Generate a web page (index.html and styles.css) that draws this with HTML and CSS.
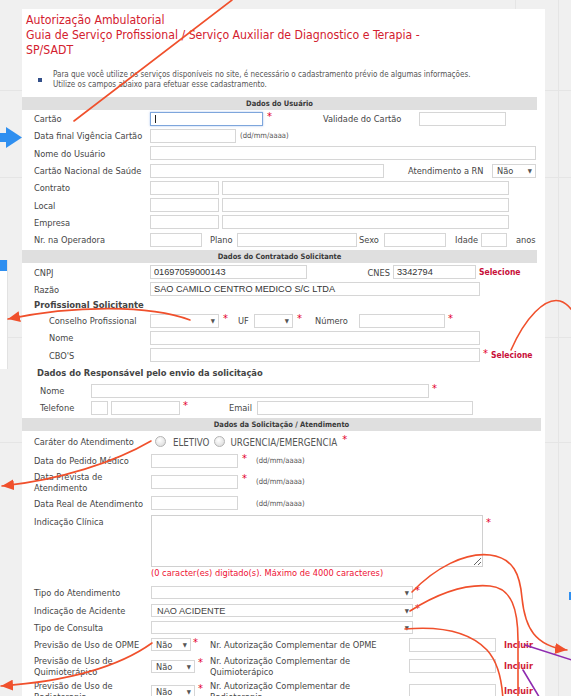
FILE: index.html
```html
<!DOCTYPE html>
<html lang="pt-BR">
<head>
    <meta charset="UTF-8">
    <meta name="viewport" content="width=device-width, initial-scale=1.0">
    <title>Autorização Ambulatorial - SP/SADT</title>
    <link rel="stylesheet" href="styles.css">
</head>
<body>
<div class="canvas">
    <div class="side-card"><div class="side-card-top"></div></div>

    <div class="panel">
        <h1 class="page-title">Autorização Ambulatorial<br>Guia de Serviço Profissional / Serviço Auxiliar de Diagnostico e Terapia -<br>SP/SADT</h1>

        <ul class="notice">
            <li>Para que você utilize os serviços disponíveis no site, é necessário o cadastramento prévio de algumas informações.<br>Utilize os campos abaixo para efetuar esse cadastramento.</li>
        </ul>

        <!-- Dados do Usuario -->
        <div class="sec-head">Dados do Usuário</div>
        <div class="row">
            <label class="lbl">Cartão</label>
            <span class="caret-wrap"><input class="in in-focus w113" type="text"></span>
            <span class="req">*</span>
            <span class="cap cap-validade">Validade do Cartão</span>
            <input class="in w87" type="text">
        </div>
        <div class="row">
            <label class="lbl">Data final Vigência Cartão</label>
            <input class="in w86" type="text">
            <span class="fmt">(dd/mm/aaaa)</span>
        </div>
        <div class="row">
            <label class="lbl">Nome do Usuário</label>
            <input class="in w386" type="text">
        </div>
        <div class="row">
            <label class="lbl">Cartão Nacional de Saúde</label>
            <input class="in w234" type="text">
            <span class="cap cap-rn">Atendimento a RN</span>
            <span class="sel w44"><select><option>Não</option></select></span>
        </div>
        <div class="row">
            <label class="lbl">Contrato</label>
            <input class="in w69" type="text">
            <input class="in w287 ml3" type="text">
        </div>
        <div class="row">
            <label class="lbl">Local</label>
            <input class="in w69" type="text">
            <input class="in w287 ml3" type="text">
        </div>
        <div class="row">
            <label class="lbl">Empresa</label>
            <input class="in w69" type="text">
            <input class="in w287 ml3" type="text">
        </div>
        <div class="row">
            <label class="lbl">Nr. na Operadora</label>
            <input class="in w52" type="text">
            <span class="cap cap-plano">Plano</span>
            <input class="in w120" type="text">
            <span class="cap cap-sexo">Sexo</span>
            <input class="in w62" type="text">
            <span class="cap cap-idade">Idade</span>
            <input class="in w26" type="text">
            <span class="cap cap-anos">anos</span>
        </div>

        <!-- Dados do Contratado Solicitante -->
        <div class="sec-head sec-head-2">Dados do Contratado Solicitante</div>
        <div class="row">
            <label class="lbl">CNPJ</label>
            <input class="in w157" type="text" value="01697059000143">
            <span class="cap cap-cnes">CNES</span>
            <input class="in w83" type="text" value="3342794">
            <a class="act ml3">Selecione</a>
        </div>
        <div class="row">
            <label class="lbl">Razão</label>
            <input class="in w330" type="text" value="SAO CAMILO CENTRO MEDICO S/C LTDA">
        </div>
        <div class="sub-head">Profissional Solicitante</div>
        <div class="row">
            <label class="lbl lbl-indent">Conselho Profissional</label>
            <span class="sel w69"><select><option></option></select></span>
            <span class="req">*</span>
            <span class="cap cap-uf">UF</span>
            <span class="sel w39"><select><option></option></select></span>
            <span class="req">*</span>
            <span class="cap cap-numero">Número</span>
            <input class="in w86" type="text">
            <span class="req ml3">*</span>
        </div>
        <div class="row">
            <label class="lbl lbl-indent">Nome</label>
            <input class="in w330" type="text">
        </div>
        <div class="row">
            <label class="lbl lbl-indent">CBO'S</label>
            <input class="in w330" type="text">
            <span class="req ml3">*</span>
            <a class="act ml2">Selecione</a>
        </div>
        <div class="sub-head sub-head-resp">Dados do Responsável pelo envio da solicitação</div>
        <div class="row">
            <label class="lbl lbl-short">Nome</label>
            <input class="in w338" type="text">
            <span class="req ml3">*</span>
        </div>
        <div class="row">
            <label class="lbl lbl-short">Telefone</label>
            <input class="in w17" type="text">
            <input class="in w69 ml3" type="text">
            <span class="req ml3">*</span>
            <span class="cap cap-email">Email</span>
            <input class="in w216" type="text">
        </div>

        <!-- Dados da Solicitacao / Atendimento -->
        <div class="sec-head sec-head-3">Dados da Solicitação / Atendimento</div>
        <div class="sol">
            <div class="row row-radio">
                <label class="lbl">Caráter do Atendimento</label>
                <input class="radio" type="radio" name="carater">
                <span class="opt">ELETIVO</span>
                <input class="radio" type="radio" name="carater">
                <span class="opt">URGENCIA/EMERGENCIA</span>
                <span class="req ml5">*</span>
            </div>
            <div class="row">
                <label class="lbl">Data do Pedido Médico</label>
                <input class="in w87" type="text">
                <span class="req">*</span>
                <span class="fmt fmt-wide">(dd/mm/aaaa)</span>
            </div>
            <div class="row row-tall">
                <label class="lbl">Data Prevista de<br>Atendimento</label>
                <input class="in w87" type="text">
                <span class="req">*</span>
                <span class="fmt fmt-wide">(dd/mm/aaaa)</span>
            </div>
            <div class="row">
                <label class="lbl">Data Real de Atendimento</label>
                <input class="in w87" type="text">
                <span class="fmt fmt-far">(dd/mm/aaaa)</span>
            </div>
            <div class="row row-area">
                <label class="lbl">Indicação Clínica</label>
                <div class="area-col">
                    <textarea class="area"></textarea>
                    <div class="counter">(0 caracter(es) digitado(s). Máximo de 4000 caracteres)</div>
                </div>
                <span class="req ml3">*</span>
            </div>
            <div class="row">
                <label class="lbl">Tipo do Atendimento</label>
                <span class="sel sel-sm w262"><select><option></option></select></span>
                <span class="req ml2">*</span>
            </div>
            <div class="row">
                <label class="lbl">Indicação de Acidente</label>
                <span class="sel sel-sm sel-arial w262"><select><option>NAO ACIDENTE</option></select></span>
                <span class="req ml2">*</span>
            </div>
            <div class="row">
                <label class="lbl">Tipo de Consulta</label>
                <span class="sel sel-sm w262"><select><option></option></select></span>
            </div>
            <div class="row">
                <label class="lbl">Previsão de Uso de OPME</label>
                <span class="sel sel-sm w40"><select><option>Não</option></select></span>
                <span class="req ml2">*</span>
                <span class="cap cap-compl">Nr. Autorização Complementar de OPME</span>
                <input class="in w87" type="text">
                <a class="act act-add">Incluir</a>
            </div>
            <div class="row row-tall">
                <label class="lbl">Previsão de Uso de<br>Quimioterápico</label>
                <span class="sel sel-sm w44"><select><option>Não</option></select></span>
                <span class="req ml3">*</span>
                <span class="cap cap-compl cap-compl-2">Nr. Autorização Complementar de<br>Quimioterápico</span>
                <input class="in w87" type="text">
                <a class="act act-add">Incluir</a>
            </div>
            <div class="row row-tall">
                <label class="lbl">Previsão de Uso de<br>Radioterapia</label>
                <span class="sel sel-sm w44"><select><option>Não</option></select></span>
                <span class="req ml3">*</span>
                <span class="cap cap-compl cap-compl-2">Nr. Autorização Complementar de<br>Radioterapia</span>
                <input class="in w87" type="text">
                <a class="act act-add">Incluir</a>
            </div>
        </div>
    </div>

    <!-- review marks drawn over the screen -->
    <svg class="marks" width="571" height="696" viewBox="0 0 571 696">
        <defs>
            <marker id="head" viewBox="0 0 10 10" refX="10" refY="5" markerUnits="userSpaceOnUse" markerWidth="12" markerHeight="11" preserveAspectRatio="none" orient="auto">
                <path d="M0,0 L10,5 L0,10 z" fill="#f0502c"/>
            </marker>
        </defs>
        <rect x="0" y="133" width="8" height="9" fill="#2f8ff0"/>
        <polygon points="6,127 22,137.5 6,148" fill="#2f8ff0"/>
        <rect x="569" y="592" width="2" height="8" fill="#2f8ff0"/>
        <g fill="none" stroke="#f0502c" stroke-width="1.6" stroke-linecap="round">
            <path d="M232,0 L74,121"/>
            <path d="M190,320 C150,305 75,305 8,319" marker-end="url(#head)"/>
            <path d="M511,350 C525,318 545,297 560,301 C567,303 571,308 575,315"/>
            <path d="M151,441 C115,462 60,480 2,486" marker-end="url(#head)"/>
            <path d="M152,643 C120,666 70,681 1,686" marker-end="url(#head)"/>
            <path d="M412,592 C435,568 465,552 490,555 C514,558 520,575 522,598 C525,628 535,646 567,650" marker-end="url(#head)"/>
            <path d="M410,611 C440,592 468,584 490,586 C512,588 518,610 518,640 L518,700"/>
            <path d="M405,629 C440,626 470,632 487,650 C498,662 502,680 503,700"/>
        </g>
        <g fill="none" stroke="#8e2bb0" stroke-width="1.6" stroke-linecap="round">
            <path d="M525,645 L575,661"/>
            <path d="M523,670 L541,700"/>
        </g>
    </svg>
</div>
</body>
</html>
```

FILE: styles.css
```css
* {
    box-sizing: border-box;
}

html, body {
    margin: 0;
    padding: 0;
}

body {
    width: 571px;
    height: 696px;
    overflow: hidden;
    font-family: "DejaVu Sans Condensed", "Liberation Sans", sans-serif;
    font-size: 9.2px;
    color: #464646;
    /* faint guide lines of the drawing board behind the screen */
    background:
        linear-gradient(#e5e5e5, #e5e5e5) 558px 0 / 1px 100% no-repeat,
        linear-gradient(#e5e5e5, #e5e5e5) 515px 0 / 1px 10px no-repeat,
        linear-gradient(#e5e5e5, #e5e5e5) 0 90px / 100% 1px no-repeat,
        linear-gradient(#e5e5e5, #e5e5e5) 0 177px / 100% 1px no-repeat,
        linear-gradient(#e5e5e5, #e5e5e5) 0 337px / 100% 1px no-repeat,
        linear-gradient(#e5e5e5, #e5e5e5) 0 442px / 100% 1px no-repeat,
        #f0f0f0;
}

.canvas {
    position: relative;
    height: 696px;
    padding-top: 9px;
}

/* piece of another card peeking in from the left */
.side-card {
    position: absolute;
    left: 0;
    top: 260px;
    width: 8px;
    height: 109px;
    background-color: #fff;
    border-right: 1px solid #e2e2e2;
}

.side-card-top {
    height: 11px;
    background-color: #2f8ff0;
}

.panel {
    margin-left: 22px;
    width: 523px;
    height: 687px;
    background-color: #fff;
    padding-top: 4px;
    overflow: hidden;
}

.page-title {
    margin: 0;
    padding-left: 4px;
    font-size: 12.2px;
    line-height: 14.8px;
    font-weight: normal;
    color: #d3202e;
}

.notice {
    list-style: none;
    margin: 12.6px 0 0;
    padding: 0 0 0 16px;
    font-size: 8px;
    line-height: 10px;
    color: #555;
}

.notice li {
    display: flex;
    gap: 11px;
}

.notice li::before {
    content: "";
    flex: none;
    width: 4px;
    height: 4px;
    margin-top: 8px;
    background-color: #34508a;
}

.sec-head {
    width: 515px;
    height: 13px;
    line-height: 13px;
    margin-top: 7px;
    background-color: #dfdfdf;
    text-align: center;
    font-size: 7.5px;
    font-weight: bold;
    color: #3a3a3a;
}

.sec-head-2 {
    margin-top: 2px;
}

.sec-head-3 {
    width: 519px;
    margin-top: 1.4px;
}

.sub-head {
    height: 14px;
    line-height: 14px;
    padding-left: 12px;
    font-size: 9.4px;
    font-weight: bold;
    color: #444;
}

.sub-head-resp {
    height: 18.1px;
    line-height: 18.1px;
    padding-left: 15px;
    font-size: 9.3px;
}

.row {
    display: flex;
    align-items: center;
    height: 17.3px;
    padding-left: 12px;
    white-space: nowrap;
}

.row-radio {
    height: 21px;
}

.row-tall {
    height: 25.3px;
}

.row-area {
    height: auto;
    align-items: flex-start;
    padding-top: 3.1px;
}

.lbl {
    flex: none;
    width: 116px;
    line-height: 11px;
}

.sol .lbl {
    width: 117px;
}

.row-area .lbl {
    margin-top: 1.5px;
}

.lbl-indent {
    padding-left: 15px;
}

.lbl-short {
    width: 57px;
    padding-left: 6px;
}

/* text boxes */
.in {
    flex: none;
    height: 14px;
    margin: 0;
    padding: 0 3px;
    border: 1px solid #d6d6d6;
    border-radius: 0;
    background-color: #fff;
    font-family: "Liberation Sans", Arial, sans-serif;
    font-size: 9.2px;
    color: #333;
    outline: none;
}

.in-focus {
    border-color: #7ea6dc;
    box-shadow: 0 0 2px rgba(90, 140, 220, 0.5);
}

.caret-wrap {
    position: relative;
    display: flex;
    flex: none;
}

.caret-wrap::after {
    content: "";
    position: absolute;
    left: 5px;
    top: 3px;
    width: 1px;
    height: 8px;
    background-color: #222;
}

.w17 { width: 17px; }
.w26 { width: 26px; }
.w39 { width: 39px; }
.w40 { width: 40px; }
.w44 { width: 44px; }
.w52 { width: 52px; }
.w62 { width: 62px; }
.w69 { width: 69px; }
.w83 { width: 83px; }
.w86 { width: 86px; }
.w87 { width: 87px; }
.w113 { width: 113px; }
.w120 { width: 120px; }
.w157 { width: 157px; }
.w216 { width: 216px; }
.w234 { width: 234px; }
.w262 { width: 262px; }
.w287 { width: 287px; }
.w330 { width: 330px; }
.w338 { width: 338px; }
.w386 { width: 386px; }

.ml2 { margin-left: 2px; }
.ml3 { margin-left: 3px; }
.ml5 { margin-left: 5px; }

/* selects */
.sel {
    position: relative;
    flex: none;
    height: 14px;
}

.sel-sm {
    height: 13px;
}

.sel select {
    -webkit-appearance: none;
    appearance: none;
    width: 100%;
    height: 100%;
    margin: 0;
    padding: 0 12px 0 4px;
    border: 1px solid #d6d6d6;
    border-radius: 0;
    background-color: #fff;
    font-family: inherit;
    font-size: 9.2px;
    line-height: 12px;
    color: #444;
}

.sel-arial select {
    font-family: "Liberation Sans", Arial, sans-serif;
    padding-left: 5px;
}

.sel::after {
    content: "\25BC";
    position: absolute;
    right: 4px;
    top: 0;
    line-height: 13px;
    font-size: 6px;
    color: #555;
    pointer-events: none;
}

/* small captions between fields */
.cap {
    flex: none;
    line-height: 11px;
}

.cap-validade { margin-left: 50px; width: 96px; }
.cap-rn { margin-left: 24px; width: 84px; }
.cap-plano { width: 35px; padding-left: 8px; }
.cap-sexo { width: 27px; padding-left: 2px; }
.cap-idade { width: 35px; padding-left: 9px; }
.cap-anos { margin-left: 9px; }
.cap-cnes { width: 86px; padding-right: 3px; text-align: right; }
.cap-uf { margin-left: 9px; width: 16px; }
.cap-numero { margin-left: 12px; width: 44px; }
.cap-email { margin-left: 40px; width: 28px; }
.cap-compl { margin-left: 11px; width: 199px; }
.cap-compl-2 { margin-left: 6px; }

.req {
    flex: none;
    width: 6px;
    margin-left: 4px;
    align-self: flex-start;
    margin-top: 1px;
    font-size: 11px;
    line-height: 11px;
    color: #e3002b;
}

.req.ml2 { margin-left: 2px; }
.req.ml3 { margin-left: 3px; }
.req.ml5 { margin-left: 5px; }

.row-tall .req {
    margin-top: 4px;
}

.row-radio .req {
    margin-top: 3px;
}

.row-area .req {
    margin-top: 2px;
}

.fmt {
    margin-left: 4px;
    font-size: 7.6px;
    color: #555;
}

.fmt-wide { margin-left: 8px; }
.fmt-far { margin-left: 18px; }

.act {
    flex: none;
    font-size: 8.5px;
    font-weight: bold;
    color: #c8103a;
    cursor: pointer;
}

.act-add {
    margin-left: 8px;
    font-size: 9px;
    color: #d01c36;
}

/* radio options */
.radio {
    -webkit-appearance: none;
    appearance: none;
    flex: none;
    width: 11px;
    height: 11px;
    margin: 0 0 0 4px;
    border: 1px solid #b4b4b4;
    border-radius: 50%;
    background: radial-gradient(circle at 40% 35%, #fff, #d6d6d6);
}

.radio + .opt {
    margin-left: 7px;
}

.opt + .radio {
    margin-left: 5px;
}

.opt {
    font-size: 9.7px;
    color: #555;
    margin-top: 2px;
}

.opt + .radio + .opt {
    margin-left: 5px;
}

/* indicacao clinica */
.area-col {
    flex: none;
    display: flex;
    flex-direction: column;
}

.area {
    display: block;
    width: 332px;
    height: 52px;
    margin: 0;
    border: 1px solid #d0d0d0;
    border-radius: 0;
    resize: vertical;
}

.counter {
    line-height: 12px;
    margin-bottom: 5.35px;
    color: #ee1133;
}

/* annotation layer */
.marks {
    position: absolute;
    left: 0;
    top: 0;
    pointer-events: none;
}
```
